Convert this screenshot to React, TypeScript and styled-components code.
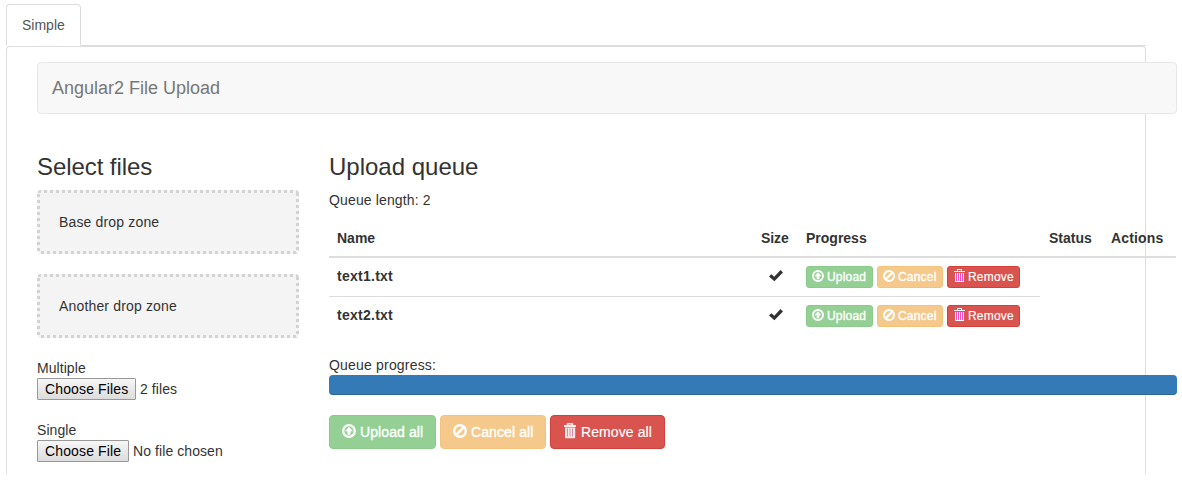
import React from 'react';
import styled, { createGlobalStyle, css } from 'styled-components';

const GlobalStyle = createGlobalStyle`
  * { box-sizing: border-box; }
  body {
    margin: 0;
    background: #fff;
    color: #333;
    font: 14px/20px "Liberation Sans", Arial, sans-serif;
    overflow: hidden;
  }
`;

const Page = styled.div`
  width: 1140px;
  margin: 4px 0 0 6px;
`;

const TabBar = styled.nav`
  display: flex;
  height: 42px;
  border-bottom: 1px solid #ddd;
`;

const Tab = styled.a`
  height: 42px;
  width: 75px;
  padding: 10px 15px;
  color: #555;
  background: #fff;
  border: 1px solid #ddd;
  border-bottom-color: transparent;
  border-radius: 4px 4px 0 0;
`;

const Panel = styled.main`
  height: 428px;
  padding: 15px 30px 0;
  border: 1px solid #ddd;
  border-bottom: 0;
  border-radius: 4px 4px 0 0;
`;

const Navbar = styled.header`
  width: 1140px;
  height: 52px;
  padding: 15px 14px;
  border: 1px solid #e7e7e7;
  border-radius: 4px;
  background: #f8f8f8;
  color: #777;
  font-size: 18px;
`;

const Columns = styled.div`
  display: flex;
  gap: 30px;
  width: 1140px;
  margin-top: 40px;
`;

const Side = styled.section`
  width: 262px;
`;

const Queue = styled.section`
  width: 848px;
`;

const Title = styled.h3<{ $track?: number }>`
  margin: 0 0 10px;
  font-size: 24px;
  font-weight: 400;
  line-height: 26px;
  letter-spacing: ${p => p.$track || 0}px;
`;

const Label = styled.div<{ $track?: number }>`
  letter-spacing: ${p => p.$track || 0}px;
`;

const dotsX = 'repeating-linear-gradient(90deg, #d3d3d3 0 3px, transparent 3px 6px)';
const dotsY = 'repeating-linear-gradient(180deg, #d3d3d3 0 3px, transparent 3px 6px)';

const DropZone = styled.div`
  height: 64px;
  margin-bottom: 20px;
  padding: 22px;
  border-radius: 4px;
  letter-spacing: 0.16px;
  background:
    ${dotsX} 1px 0 / 100% 3px no-repeat,
    ${dotsX} 4px 100% / 100% 3px no-repeat,
    ${dotsY} 0 4px / 3px 100% no-repeat,
    ${dotsY} 100% 3px / 3px 100% no-repeat,
    #f4f4f4;
`;

const FileField = styled.div`
  height: 62px;
`;

const FileRow = styled.div`
  display: flex;
  align-items: center;
  gap: 4px;
  height: 22px;
  letter-spacing: 0.08px;
`;

const FileButton = styled.button<{ $w: number }>`
  width: ${p => p.$w}px;
  height: 22px;
  padding: 0 0 0 7px;
  border: 1px solid #999;
  border-radius: 1px;
  background: linear-gradient(#f6f6f6, #dcdcdc);
  color: #000;
  font: inherit;
  letter-spacing: 0.14px;
  text-align: left;
  white-space: nowrap;
`;

const Table = styled.table`
  width: 847px;
  margin: 10px 0 20px;
  border-collapse: separate;
  border-spacing: 0;
  table-layout: fixed;
`;

const Th = styled.th<{ $w: number; $track?: number; $indent?: number }>`
  width: ${p => p.$w}px;
  height: 38px;
  padding: 8px 0 8px ${p => p.$indent || 8}px;
  border-bottom: 2px solid #ddd;
  text-align: left;
  letter-spacing: ${p => p.$track || 0}px;
`;

const Td = styled.td<{ $line?: boolean; $center?: boolean }>`
  padding: 8px;
  font-weight: 700;
  vertical-align: top;
  line-height: 20px;
  letter-spacing: 0.26px;
  ${p => p.$line && css`border-top: 1px solid #ddd;`}
  ${p => p.$center && css`text-align: center;`}
`;

const Buttons = styled.div`
  display: flex;
  gap: 4px;
`;

const tones = {
  success: ['#5cb85c', '#4cae4c'],
  warning: ['#f0ad4e', '#eea236'],
  danger: ['#d9534f', '#d43f3a'],
};
type Tone = keyof typeof tones;

const Button = styled.button<{ $tone: Tone; $w: number; $small?: boolean }>`
  display: flex;
  align-items: center;
  width: ${p => p.$w}px;
  height: ${p => (p.$small ? 22 : 34)}px;
  padding: 0 ${p => (p.$small ? 5 : 12)}px;
  gap: ${p => (p.$small ? 3 : 4)}px;
  border: 1px solid ${p => tones[p.$tone][1]};
  border-radius: ${p => (p.$small ? 3 : 4)}px;
  background: ${p => tones[p.$tone][0]};
  color: #fff;
  font: ${p => (p.$small ? '12px/18px' : '14px/20px')} "Liberation Sans", Arial, sans-serif;
  letter-spacing: ${p => (p.$small ? 0.2 : 0.1)}px;
  white-space: nowrap;
  opacity: ${p => (p.$tone === 'danger' ? 1 : 0.65)};
  -webkit-text-stroke: ${p => (p.$tone === 'danger' ? 0.15 : 0.35)}px #fff;
  svg {
    flex: none;
    margin-bottom: 2px;
  }
`;

const ProgressTrack = styled.div`
  height: 20px;
  margin-bottom: 20px;
  border-radius: 4px;
  background: #337ab7;
  box-shadow: inset 0 -1px 0 rgba(0, 0, 0, 0.15);
`;

const UploadIcon = ({ size }: { size: number }) => (
  <svg width={size} height={size} viewBox="0 0 14 14">
    <circle cx="7" cy="7" r="5.8" fill="none" stroke="#fff" strokeWidth="2.300" />
    <path d="M7 2.700 11 7.200H8.500v3.600h-3V7.200H3z" fill="#fff" />
  </svg>
);

const CancelIcon = ({ size }: { size: number }) => (
  <svg width={size} height={size} viewBox="0 0 14 14">
    <circle cx="7" cy="7" r="5.8" fill="none" stroke="#fff" strokeWidth="2.400" />
    <path d="M3.200 10.800 10.800 3.200" stroke="#fff" strokeWidth="2.600" />
  </svg>
);

const TrashSmall = () => (
  <svg width="12" height="14" viewBox="0 0 12 14">
    <path d="M4 0h5v1H4zM4 1h1v1H4zM8 1h1v1H8zM1 2h11v1H1zM2 4h9v9H2z" fill="#fff" />
    <path d="M3 4h1v8H3zM5 4h1v8H5zM7 4h1v8H7zM9 4h1v8H9z" fill="#f24fc4" />
  </svg>
);

const TrashLarge = () => (
  <svg width="14" height="16" viewBox="0 0 14 16">
    <path d="M4.500 2V.9h5V2" fill="none" stroke="#fff" strokeWidth="1.3" />
    <path d="M1 2h12v2H1z" fill="#fff" opacity=".88" />
    <path d="M2 4.500h10.200v10q0 .8-.8.8H2.800q-.8 0-.8-.8z" fill="#fff" opacity=".88" />
    <path d="M4.500 5.500v8M7 5.500v8M9.500 5.500v8" stroke="#dc7f9a" strokeWidth=".9" />
  </svg>
);

const Check = styled.svg`
  display: block;
  margin: 4px auto 0;
`;

const CheckIcon = () => (
  <Check width="14" height="12" viewBox="0 0 14 12">
    <path d="M0 6.600 2.300 4.300l3 2.500L11.500 0 14 2.500 5.400 11.300z" fill="#333" />
  </Check>
);

type FilePickerProps = { label: string; button: string; width: number; value: string };

const FilePicker = ({ label, button, width, value }: FilePickerProps) => (
  <FileField>
    <Label $track={0.06}>{label}</Label>
    <FileRow>
      <FileButton $w={width}>{button}</FileButton>
      <span>{value}</span>
    </FileRow>
  </FileField>
);

const files = ['text1.txt', 'text2.txt'];

export default function App() {
  return (
    <>
      <GlobalStyle />
      <Page>
        <TabBar><Tab>Simple</Tab></TabBar>
        <Panel>
          <Navbar>Angular2 File Upload</Navbar>
          <Columns>
            <Side>
              <Title $track={-0.08}>Select files</Title>
              <DropZone>Base drop zone</DropZone>
              <DropZone>Another drop zone</DropZone>
              <FilePicker label="Multiple" button="Choose Files" width={99} value="2 files" />
              <FilePicker label="Single" button="Choose File" width={92} value="No file chosen" />
            </Side>
            <Queue>
              <Title>Upload queue</Title>
              <Label $track={0.14}>Queue length: 2</Label>
              <Table>
                <thead>
                  <tr>
                    <Th $w={424}>Name</Th>
                    <Th $w={45} $track={-0.1}>Size</Th>
                    <Th $w={242}>Progress</Th>
                    <Th $w={63} $indent={9}>Status</Th>
                    <Th $w={73} $track={0.15}>Actions</Th>
                  </tr>
                </thead>
                <tbody>
                  {files.map((name, i) => (
                    <tr key={name}>
                      <Td $line={i > 0}>{name}</Td>
                      <Td $line={i > 0} $center><CheckIcon /></Td>
                      <Td $line={i > 0}>
                        <Buttons>
                          <Button $small $tone="success" $w={67}><UploadIcon size={12} />Upload</Button>
                          <Button $small $tone="warning" $w={66}><CancelIcon size={12} />Cancel</Button>
                          <Button $small $tone="danger" $w={73}><TrashSmall />Remove</Button>
                        </Buttons>
                      </Td>
                    </tr>
                  ))}
                </tbody>
              </Table>
              <Label $track={0.19}>Queue progress:</Label>
              <ProgressTrack />
              <Buttons>
                <Button $tone="success" $w={107}><UploadIcon size={14} />Upload all</Button>
                <Button $tone="warning" $w={106}><CancelIcon size={14} />Cancel all</Button>
                <Button $tone="danger" $w={115}><TrashLarge />Remove all</Button>
              </Buttons>
            </Queue>
          </Columns>
        </Panel>
      </Page>
    </>
  );
}
